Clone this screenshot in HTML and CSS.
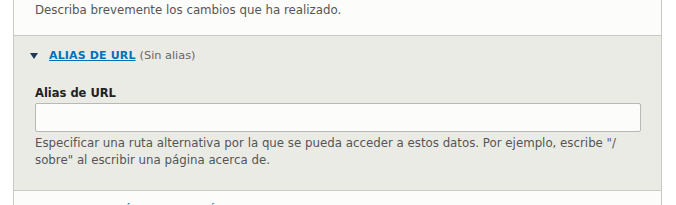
FILE: index.html
```html
<!DOCTYPE html>
<html lang="es">
<head>
  <meta charset="UTF-8" />
  <title>Alias de URL</title>
  <link rel="stylesheet" href="styles.css">
</head>
<body>
  <div class="panel">
    <div class="revision">
      <p class="description">Describa brevemente los cambios que ha realizado.</p>
    </div>

    <div class="details">
      <div class="summary">
        <span class="arrow"></span>
        <a href="#" class="summary-title">Alias de URL</a>
        <span class="summary-note">(Sin alias)</span>
      </div>
      <div class="details-body">
        <label class="field-label" for="alias">Alias de URL</label>
        <input type="text" id="alias" class="form-text">
        <p class="description">Especificar una ruta alternativa por la que se pueda acceder a estos datos. Por ejemplo, escribe "/<wbr>sobre" al escribir una página acerca de.</p>
      </div>
    </div>

    <div class="next-section">
      <a href="#" class="summary-title">Información de autoría</a>
    </div>
  </div>
</body>
</html>
```

FILE: styles.css
```css
* {
  box-sizing: border-box;
}

body {
  margin: 0;
  background: #fff;
  color: #333;
  font-family: "DejaVu Sans", Verdana, sans-serif;
  font-size: 12px;
}

.panel {
  margin: 0 14px 0 13px;
  border-left: 1px solid #c9c9c6;
  border-right: 1px solid #c9c9c6;
  background: #fcfcfa;
}

.description {
  margin: 0;
  color: #555;
  font-size: 11.8px;
  line-height: 17px;
}

.revision {
  padding: 2px 21px 16px;
}

.details {
  background: #ebebe6;
  border-top: 1px solid #c9c9c6;
  border-bottom: 1px solid #c9c9c6;
}

.summary {
  display: flex;
  align-items: center;
  padding: 12px 16px 13px;
  line-height: 16px;
}

.arrow {
  width: 0;
  height: 0;
  border-left: 4px solid transparent;
  border-right: 4px solid transparent;
  border-top: 6px solid #1e3a57;
  margin-right: 11px;
}

.summary-title {
  color: #0071b8;
  font-weight: bold;
  font-size: 11px;
  letter-spacing: 0.15px;
  text-transform: uppercase;
  text-decoration: underline;
}

.summary-note {
  margin-left: 4px;
  color: #666;
  font-size: 11.3px;
}

.details-body {
  padding: 8px 20px 21px 21px;
}

.field-label {
  display: block;
  font-weight: bold;
  font-size: 11.5px;
  color: #222;
  line-height: 16px;
  margin-bottom: 2px;
}

.form-text {
  display: block;
  width: 100%;
  height: 29px;
  border: 1px solid #b8b8b8;
  border-radius: 2px;
  background: #fcfcfa;
  margin-bottom: 3px;
}

.next-section {
  padding: 11px 21px 20px 38px;
}
```
